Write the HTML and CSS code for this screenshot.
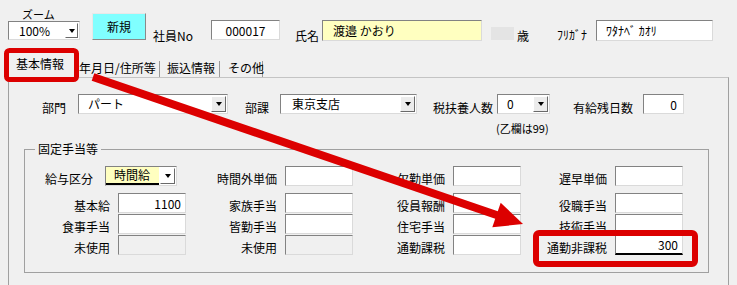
FILE: index.html
```html
<!DOCTYPE html>
<html lang="ja">
<head>
  <meta charset="UTF-8" />
  <title>社員情報</title>
  <link rel="stylesheet" href="styles.css">
</head>
<body>

  <div class="window">

    <!-- header row -->
    <div class="topbar">
      <div class="zoom">
        <div class="zoom-label">ズーム</div>
        <div class="combo zoom-combo">
          <span class="combo-text">100%</span>
          <span class="drop"></span>
        </div>
      </div>
      <button class="btn-new">新規</button>
      <span class="lbl lbl-no">社員No</span>
      <input class="field emp-no" type="text" value="000017" />
      <span class="lbl lbl-name">氏名</span>
      <input class="field name" type="text" value="渡邉 かおり" />
      <span class="age"></span>
      <span class="lbl lbl-age">歳</span>
      <span class="lbl lbl-kana">ﾌﾘｶﾞﾅ</span>
      <input class="field kana" type="text" value="ﾜﾀﾅﾍﾞ ｶｵﾘ" />
    </div>

    <!-- tabs -->
    <div class="tabs">
      <div class="tab active">基本情報</div>
      <div class="tab tab-2">年月日/住所等</div>
      <div class="tab tab-3">振込情報</div>
      <div class="tab tab-4">その他</div>
    </div>

    <div class="tabpage">
      <div class="dept-row">
        <span class="lbl lbl-bumon">部門</span>
        <div class="combo bumon">
          <span class="combo-text">パート</span>
          <span class="drop"></span>
        </div>
        <span class="lbl lbl-buka">部課</span>
        <div class="combo buka">
          <span class="combo-text">東京支店</span>
          <span class="drop"></span>
        </div>
        <span class="lbl lbl-fuyo">税扶養人数</span>
        <div class="combo fuyo">
          <span class="combo-text">0</span>
          <span class="drop"></span>
        </div>
        <span class="lbl lbl-yukyu">有給残日数</span>
        <input class="field yukyu num" type="text" value="0" />
      </div>
      <div class="note">(乙欄は99)</div>

      <div class="group">
        <span class="legend">固定手当等</span>
        <div class="grid">
          <div class="kubun">
            <span class="kubun-lbl">給与区分</span>
            <div class="combo kubun-combo">
              <span class="combo-text">時間給</span>
              <span class="drop"></span>
            </div>
          </div>
          <span class="glbl">時間外単価</span>
          <input class="field" type="text" />
          <span class="glbl">欠勤単価</span>
          <input class="field" type="text" />
          <span class="glbl">遅早単価</span>
          <input class="field" type="text" />

          <span class="glbl">基本給</span>
          <input class="field num" type="text" value="1100" />
          <span class="glbl">家族手当</span>
          <input class="field" type="text" />
          <span class="glbl">役員報酬</span>
          <input class="field" type="text" />
          <span class="glbl">役職手当</span>
          <input class="field" type="text" />

          <span class="glbl">食事手当</span>
          <input class="field" type="text" />
          <span class="glbl">皆勤手当</span>
          <input class="field" type="text" />
          <span class="glbl">住宅手当</span>
          <input class="field" type="text" />
          <span class="glbl">技術手当</span>
          <input class="field" type="text" />

          <span class="glbl">未使用</span>
          <input class="field" type="text" disabled />
          <span class="glbl">未使用</span>
          <input class="field" type="text" disabled />
          <span class="glbl">通勤課税</span>
          <input class="field" type="text" />
          <span class="glbl">通勤非課税</span>
          <input class="field num focus" type="text" value="300" />
        </div>
      </div>
    </div>

    <!-- red annotation -->
    <svg class="overlay" width="737" height="285" viewBox="0 0 737 285">
      <rect x="6.5" y="50.5" width="70" height="29" rx="3" fill="none" stroke="#dc0000" stroke-width="5" />
      <rect x="536" y="233" width="159" height="31" rx="3" fill="none" stroke="#dc0000" stroke-width="6" />
      <line x1="93" y1="77" x2="498" y2="215.5" stroke="#dc0000" stroke-width="8" />
      <polygon points="523,224 500.7,202.7 492.3,227.3" fill="#dc0000" />
    </svg>

  </div>

</body>
</html>
```

FILE: styles.css
```css
:root {
  --bg: #f0f0f0;
  --dark: #828282;
  --light: #dadada;
  --yellow: #ffffc0;
}

body {
  margin: 0;
  padding: 0;
  background: var(--bg);
  font-family: "Noto Sans CJK JP", "Noto Sans", sans-serif;
  font-size: 12px;
  color: #000;
}

.window {
  position: relative;
  width: 737px;
  height: 285px;
  overflow: hidden;
}

.lbl {
  line-height: 16px;
  white-space: nowrap;
}

/* inputs */
.field {
  box-sizing: border-box;
  height: 20px;
  margin: 0;
  padding: 0 4px;
  font: inherit;
  color: #000;
  background: #fff;
  border: 1px solid;
  border-color: var(--dark) var(--light) var(--light) var(--dark);
  outline: none;
}

.field:disabled {
  background: var(--bg);
}

.field.num {
  text-align: right;
}

.field.focus {
  border-bottom: 2px solid #000;
}

/* combo box */
.combo {
  box-sizing: border-box;
  display: flex;
  height: 20px;
  background: #fff;
  border: 1px solid;
  border-color: var(--dark) var(--light) var(--light) var(--dark);
}

.combo-text {
  flex: 1;
  padding-left: 9px;
  line-height: 18px;
  white-space: nowrap;
}

.drop {
  box-sizing: border-box;
  display: flex;
  align-items: center;
  justify-content: center;
  width: 15px;
  margin: 1px;
  background: #ececec;
  border: 1px solid;
  border-color: #fff #696969 #696969 #fff;
}

.drop::after {
  content: "";
  border-left: 3px solid transparent;
  border-right: 3px solid transparent;
  border-top: 4px solid #000;
}

/* header row */
.topbar {
  display: flex;
  align-items: flex-start;
  height: 45px;
  padding-left: 8px;
}

.zoom {
  width: 72px;
  margin-top: 8px;
}

.zoom-label {
  padding-left: 14px;
  font-size: 11px;
  line-height: 13px;
}

.zoom-combo {
  height: 19px;
}

.zoom-combo .combo-text {
  padding-left: 10px;
  line-height: 17px;
}

.zoom-combo .drop {
  width: 13px;
  background: #fff;
}

.btn-new {
  width: 54px;
  height: 27px;
  margin: 13px 0 0 12px;
  padding: 0;
  font: inherit;
  background: #80ffff;
  border: 1px solid;
  border-color: #e8e8e8 #8a8a8a #8a8a8a #e8e8e8;
}

.lbl-no {
  width: 51px;
  margin: 28px 0 0 7px;
}

.emp-no {
  width: 69px;
  margin-top: 20px;
  margin-left: 7px;
  text-align: center;
}

.lbl-name {
  width: 27px;
  margin: 28px 0 0 15px;
}

.name {
  width: 160px;
  height: 21px;
  margin-top: 20px;
  padding-left: 10px;
  background: var(--yellow);
}

.age {
  width: 23px;
  height: 13px;
  margin: 27px 0 0 9px;
  background: #e4e4e4;
}

.lbl-age {
  margin: 28px 0 0 3px;
}

.lbl-kana {
  width: 39px;
  margin: 27px 0 0 28px;
}

.kana {
  width: 117px;
  height: 21px;
  margin-top: 20px;
  padding-left: 9px;
}

/* tabs */
.tabs {
  display: flex;
  align-items: flex-end;
  height: 32px;
  padding-left: 8px;
}

.tab {
  box-sizing: border-box;
  height: 16px;
  line-height: 14px;
  white-space: nowrap;
  border-right: 1px solid #9a9a9a;
}

.tab.active {
  position: relative;
  width: 68px;
  height: 29px;
  margin-bottom: -1px;
  padding-left: 7px;
  line-height: 27px;
  background: var(--bg);
  border: 1px solid #b4b4b4;
  border-bottom: none;
}

.tab-2 {
  width: 84px;
  padding-left: 3px;
}

.tab-3 {
  width: 60px;
  padding-left: 7px;
}

.tab-4 {
  width: 43px;
  padding-left: 8px;
}

.tabpage {
  box-sizing: border-box;
  width: 721px;
  height: 220px;
  margin-left: 8px;
  padding-top: 16px;
  border: 1px solid #a0a0a0;
  border-top-color: #c4c4c4;
}

.dept-row {
  display: flex;
  align-items: flex-start;
  height: 20px;
  padding-left: 33px;
}

.dept-row .lbl {
  padding-top: 6px;
}

.lbl-bumon { width: 36px; }
.bumon { width: 150px; }
.lbl-buka { width: 35px; margin-left: 17px; }
.buka { width: 137px; }
.buka .combo-text { padding-left: 11px; }
.lbl-fuyo { width: 64px; margin-left: 16px; }
.fuyo { width: 53px; }
.lbl-yukyu { width: 70px; margin-left: 23px; }
.yukyu { width: 41px; padding-right: 6px; }

.note {
  margin: 7px 0 0 487px;
  font-size: 11px;
  line-height: 14px;
  white-space: nowrap;
}

/* group box */
.group {
  position: relative;
  box-sizing: border-box;
  width: 685px;
  height: 124px;
  margin: 14px 0 0 15px;
  padding: 16px 0 0 5px;
  border: 1px solid #a0a0a0;
}

.legend {
  position: absolute;
  top: -9px;
  left: 10px;
  padding: 0 3px;
  line-height: 16px;
  background: var(--bg);
}

.grid {
  display: grid;
  grid-template-columns: 88px 68px 99px 68px 100px 68px 94px 68px;
  grid-template-rows: 27px 21px 21px 20px;
  align-items: start;
}

.glbl {
  padding: 5px 8px 0 0;
  line-height: 16px;
  text-align: right;
  white-space: nowrap;
}

.kubun {
  grid-column: 1 / 3;
  display: flex;
  align-items: flex-start;
  padding-left: 15px;
}

.kubun-lbl {
  width: 60px;
  padding-top: 5px;
  line-height: 16px;
}

.kubun-combo {
  width: 72px;
}

.kubun-combo .combo-text {
  padding-left: 8px;
  line-height: 16px;
  background: var(--yellow);
  border-bottom: 2px solid #000;
}

.kubun-combo .drop {
  background: #fff;
}

.overlay {
  position: absolute;
  top: 0;
  left: 0;
  pointer-events: none;
}
```
